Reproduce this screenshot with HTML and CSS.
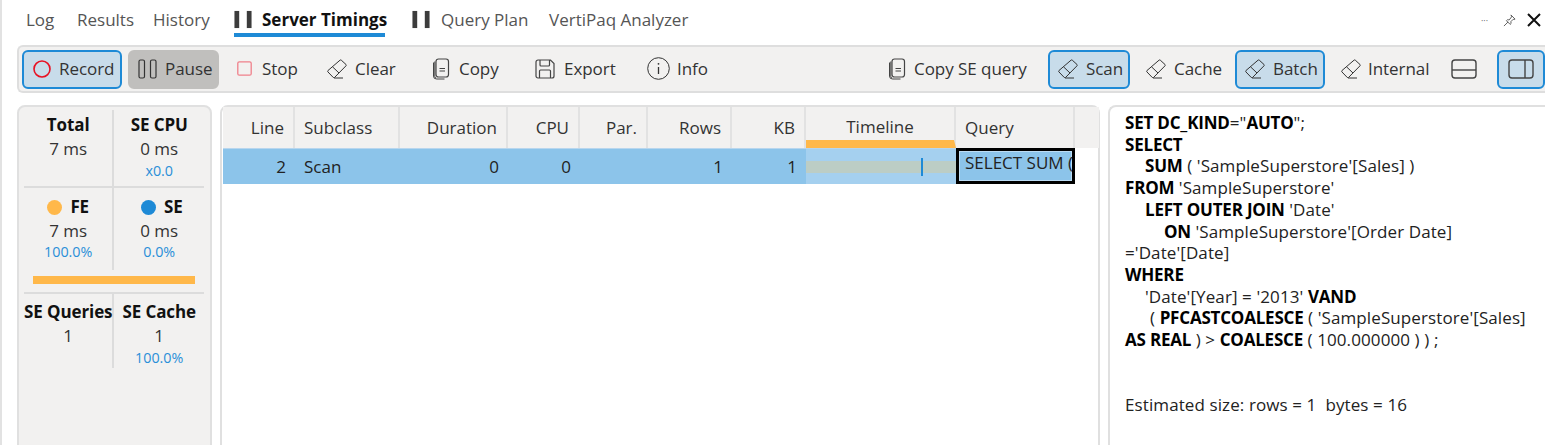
FILE: index.html
```html
<!DOCTYPE html>
<html lang="en">
<head>
<meta charset="utf-8">
<title>Server Timings</title>
<link rel="stylesheet" href="styles.css">
</head>
<body>
<svg class="defs" width="0" height="0" aria-hidden="true">
  <symbol id="eraser" viewBox="0 0 20 20"><path d="M1 11.500 13 1.200a1 1 0 0 1 1.300 0L19 5.500a1 1 0 0 1 0 1.300L7.500 18.500H6.300L1 13a1 1 0 0 1 0-1.500ZM5.500 7.800 12 14M7 19H16" fill="none" stroke="currentColor" stroke-width="1"/></symbol>
  <symbol id="copy" viewBox="0 0 18 22"><rect x="4" y="1" width="12.500" height="18" rx="2.500" fill="none" stroke="currentColor" stroke-width="1.200"/><path d="M1.500 4.500V18a3 3 0 0 0 3 3h8M2.800 3.500V18.500a1.500 1.500 0 0 0 1.500 1.500" fill="none" stroke="currentColor" stroke-width="1"/><path d="M7.500 10.500h5.500M7.500 13h5.500" stroke="currentColor" stroke-width="1"/></symbol>
  <symbol id="pause" viewBox="0 0 18 20"><rect x="0" y="1" width="5" height="18" fill="currentColor"/><rect x="13" y="1" width="5" height="18" fill="currentColor"/></symbol>
</svg>
<div class="page">
  <div class="tabs">
    <nav class="tab-list">
      <span class="tab tab-log">Log</span>
      <span class="tab tab-results">Results</span>
      <span class="tab tab-history">History</span>
      <span class="tab tab-active"><svg class="tab-pause"><use href="#pause"/></svg><b>Server Timings</b></span>
      <span class="tab tab-plan"><svg class="tab-pause"><use href="#pause"/></svg>Query Plan</span>
      <span class="tab tab-verti">VertiPaq Analyzer</span>
    </nav>
    <div class="win-controls">
      <span class="dots">···</span>
      <svg class="pin" viewBox="0 0 14 14"><path d="M8.500 1 13 5.500l-1 .5-1-.3L8.500 8.200l.2 2-1 1-4-4 1-1 2 .2L9.300 3l-.3-1ZM5.500 8.500 1 13" fill="none" stroke="#555" stroke-width="1"/></svg>
      <svg class="close" viewBox="0 0 14 14"><path d="M1 1 13 13M13 1 1 13" stroke="#111" stroke-width="2"/></svg>
    </div>
  </div>

  <div class="toolbar">
    <button class="tool on w-record"><svg class="ic" width="20" height="20" viewBox="0 0 20 20"><circle cx="10" cy="10" r="8" fill="none" stroke="#e81123" stroke-width="1.600"/></svg>Record</button>
    <button class="tool pressed w-pause"><svg class="ic" width="19" height="20" viewBox="0 0 19 20"><rect x="1" y="1" width="5.500" height="18" rx="1.500" fill="none" stroke="#333" stroke-width="1.200"/><rect x="12.500" y="1" width="5.500" height="18" rx="1.500" fill="none" stroke="#333" stroke-width="1.200"/></svg>Pause</button>
    <button class="tool w-stop"><svg class="ic" width="15" height="15" viewBox="0 0 15 15"><rect x=".8" y=".8" width="13.400" height="13.400" rx="1.500" fill="none" stroke="#f0808a" stroke-width="1.300"/></svg>Stop</button>
    <button class="tool w-clear"><svg class="ic era"><use href="#eraser"/></svg>Clear</button>
    <button class="tool w-copy"><svg class="ic cpy"><use href="#copy"/></svg>Copy</button>
    <button class="tool w-export"><svg class="ic" width="20" height="20" viewBox="0 0 20 20"><path d="M1 3a2 2 0 0 1 2-2h12.500L19 4.500V17a2 2 0 0 1-2 2H3a2 2 0 0 1-2-2ZM5 1v5a1 1 0 0 0 1 1h7.500a1 1 0 0 0 1-1V1M4.500 19v-7a1 1 0 0 1 1-1h9a1 1 0 0 1 1 1v7" fill="none" stroke="#444" stroke-width="1.200"/></svg>Export</button>
    <button class="tool w-info"><svg class="ic" width="23" height="23" viewBox="0 0 23 23"><circle cx="11.500" cy="11.500" r="10.800" fill="none" stroke="#333" stroke-width="1"/><path d="M11.500 10v7" stroke="#333" stroke-width="1.300"/><circle cx="11.500" cy="6.800" r=".9" fill="#333"/></svg>Info</button>
    <span class="spacer"></span>
    <button class="tool w-copyse"><svg class="ic cpy"><use href="#copy"/></svg>Copy SE query</button>
    <button class="tool on w-scan"><svg class="ic era"><use href="#eraser"/></svg>Scan</button>
    <button class="tool w-cache"><svg class="ic era"><use href="#eraser"/></svg>Cache</button>
    <button class="tool on w-batch"><svg class="ic era"><use href="#eraser"/></svg>Batch</button>
    <button class="tool w-internal"><svg class="ic era"><use href="#eraser"/></svg>Internal</button>
    <button class="tool w-hlayout"><svg class="ic" width="26" height="20" viewBox="0 0 26 20"><rect x="1" y="1" width="24" height="18" rx="3" fill="none" stroke="#444" stroke-width="1.400"/><path d="M1 11h24" stroke="#444" stroke-width="1.400"/></svg></button>
    <button class="tool on w-vlayout"><svg width="26" height="20" viewBox="0 0 26 20"><rect x="1" y="1" width="24" height="18" rx="3" fill="none" stroke="#444" stroke-width="1.400"/><path d="M17 1v18" stroke="#444" stroke-width="1.400"/></svg></button>
  </div>

  <div class="panels">
    <aside class="summary">
      <div class="metric br"><b>Total</b><span>7 ms</span></div>
      <div class="metric"><b>SE CPU</b><span>0 ms</span><small>x0.0</small></div>
      <div class="rule"></div>
      <div class="metric br m2"><b><i class="dot fe"></i>FE</b><span>7 ms</span><small>100.0%</small></div>
      <div class="metric m2"><b><i class="dot se"></i>SE</b><span>0 ms</span><small>0.0%</small></div>
      <div class="ratio"></div>
      <div class="rule"></div>
      <div class="metric br m3"><b>SE Queries</b><span>1</span></div>
      <div class="metric m3"><b>SE Cache</b><span>1</span><small>100.0%</small></div>
    </aside>

    <section class="grid-panel">
      <div class="table">
        <div class="th r">Line</div>
        <div class="th">Subclass</div>
        <div class="th r">Duration</div>
        <div class="th r">CPU</div>
        <div class="th r">Par.</div>
        <div class="th r">Rows</div>
        <div class="th r">KB</div>
        <div class="th c tl">Timeline</div>
        <div class="th">Query</div>
        <div class="th last"></div>
        <div class="td r">2</div>
        <div class="td">Scan</div>
        <div class="td r">0</div>
        <div class="td r">0</div>
        <div class="td r"></div>
        <div class="td r">1</div>
        <div class="td r">1</div>
        <div class="td tlcell"><span class="tlbar"></span><span class="tick"></span></div>
        <div class="td qcell"><span>SELECT SUM (</span></div>
      </div>
    </section>

    <section class="query">
      <div class="ql"><b>SET DC_KIND</b>="<b>AUTO</b>";</div>
      <div class="ql"><b>SELECT</b></div>
      <div class="ql i1"><b>SUM</b> ( 'SampleSuperstore'[Sales] )</div>
      <div class="ql"><b>FROM</b> 'SampleSuperstore'</div>
      <div class="ql i1"><b>LEFT OUTER JOIN</b> 'Date'</div>
      <div class="ql i2"><b>ON</b> 'SampleSuperstore'[Order Date]</div>
      <div class="ql">='Date'[Date]</div>
      <div class="ql"><b>WHERE</b></div>
      <div class="ql i1">'Date'[Year] = '2013' <b>VAND</b></div>
      <div class="ql i3">( <b>PFCASTCOALESCE</b> ( 'SampleSuperstore'[Sales]</div>
      <div class="ql"><b>AS REAL</b> ) &gt; <b>COALESCE</b> ( 100.000000 ) ) ;</div>
      <div class="ql est">Estimated size: rows = 1&nbsp; bytes = 16</div>
    </section>
  </div>
</div>
</body>
</html>
```
FILE: styles.css
```css
* { box-sizing: border-box; }
html, body { margin: 0; padding: 0; height: 445px; overflow: hidden; background: #fff; }
body { font-family: "Open Sans", "Noto Sans", sans-serif; font-size: 17px; color: #222; }
.defs { position: absolute; }
.page { height: 445px; border-left: 2px solid #e2e2e2; overflow: hidden; }

.tabs { height: 45px; display: flex; justify-content: space-between; }
.tab-list { display: flex; height: 37px; padding-left: 24px; }
.tab { display: flex; align-items: center; height: 37px; padding-top: 1px; color: #555; white-space: nowrap; font-size: 17px; }
.tab-log { width: 51px; }
.tab-results { width: 76px; }
.tab-history { width: 81px; }
.tab-active { width: 178px; color: #111; position: relative; }
.tab-active b { font-weight: 700; font-size: 17px; margin-left: -1px; }
.tab-active::after { content: ""; position: absolute; left: 0; width: 151px; bottom: 0; height: 4px; background: #1e8ad6; }
.tab-plan { width: 137px; }
.tab-verti { width: 140px; }
.tab-pause { width: 18px; height: 19px; margin-right: 11px; color: #3c3c3c; flex: none; }
.win-controls { display: flex; align-items: center; height: 40px; padding-right: 4px; gap: 9px; }
.dots { font-size: 9px; color: #666; width: 8px; margin-right: 5px; line-height: 1; }
.pin { width: 13px; height: 13px; margin-right: 3px; }
.close { width: 14px; height: 14px; margin-left: -1px; }

.toolbar { margin-left: 15px; height: 48px; background: #f2f1f0; border: 1px solid #dedede; border-width: 2px 0 2px 2px; border-radius: 6px 0 0 6px; display: flex; align-items: center; padding-left: 3px; }
.tool { height: 39px; border: 2px solid transparent; border-radius: 6px; background: none; padding: 0 0 1px; display: flex; align-items: center; font: inherit; font-size: 17px; letter-spacing: -.05px; color: #333; white-space: nowrap; flex: none; }
.tool.on { background: #c8dcea; border-color: #1e8ad6; }
.tool.pressed { background: #c0bfbd; border-color: #c0bfbd; }
.ic { flex: none; }
.era { width: 20px; height: 20px; color: #333; }
.cpy { width: 18px; height: 22px; color: #444; }
.spacer { flex: 1; }

.w-record { width: 100px; padding-left: 8px; margin-right: 6px; }
.w-record .ic { margin-right: 7px; }
.w-pause { width: 91px; padding-left: 8px; margin-right: 16px; }
.w-pause .ic { margin-right: 8px; }
.w-stop { width: 75px; margin-right: 16px; }
.w-stop .ic { margin-right: 10px; }
.w-clear { width: 104px; }
.w-clear .ic { margin: 0 8px 0 -1px; }
.w-copy { width: 103px; }
.w-copy .ic { margin-right: 9px; }
.w-export { width: 112px; }
.w-export .ic { margin-right: 9px; }
.w-info { width: 100px; }
.w-info .ic { margin-right: 7px; }
.w-copyse { width: 160px; }
.w-copyse .ic { margin: 0 8px 0 -2px; }
.w-scan { width: 82px; padding-left: 8px; margin-right: 16px; }
.w-scan .ic { margin-right: 8px; }
.w-cache { width: 89px; }
.w-cache .ic { margin: 0 8px 0 -2px; }
.w-batch { width: 90px; padding-left: 8px; margin-right: 16px; }
.w-batch .ic { margin-right: 8px; }
.w-internal { width: 110px; }
.w-internal .ic { margin: 0 7px 0 -2px; }
.w-hlayout { width: 46px; }
.w-hlayout .ic { margin-left: -2px; }
.w-vlayout { width: 48px; padding-left: 9px; }

.panels { display: flex; margin-top: 12px; margin-left: 15px; height: 360px; }
.summary, .grid-panel, .query { border: 2px solid #e0e0e0; border-radius: 8px 8px 0 0; }

.summary { width: 195px; margin-right: 8px; background: #f2f1f0; padding: 3px 6px 0 5px; display: grid; grid-template-columns: 1fr 1fr; grid-auto-rows: min-content; align-content: start; flex: none; }
.metric { display: flex; flex-direction: column; align-items: center; text-align: center; height: 76px; white-space: nowrap; line-height: 24px; padding-top: 3px; font-size: 17px; }
.metric b { font-weight: 700; color: #111; display: flex; align-items: center; font-size: 17px; letter-spacing: -.1px; }
.metric span { color: #333; }
.metric small { color: #2a8fd8; font-size: 14.300px; line-height: 20px; margin-top: 0; }
.br { border-right: 2px solid #dcdcdc; }
.rule { grid-column: 1 / -1; height: 2px; background: #dcdcdc; }
.m2 { height: 82px; padding-top: 7px; }
.m2 small { margin-top: -1px; }
.m3 { height: 74px; padding-top: 6px; }
.m3 small { margin-top: 0; }
.dot { width: 15px; height: 15px; border-radius: 50%; margin-right: 8px; }
.fe { background: #ffb84a; }
.se { background: #1e8ad6; margin-left: 5px; }
.ratio { grid-column: 1 / -1; height: 8px; background: #ffb84a; margin: 6px 9px 8px; }

.grid-panel { width: 880px; margin-right: 8px; padding-left: 1px; background: #fff; flex: none; }
.table { display: grid; grid-template-columns: 72px 105px 108px 72px 68px 84px 74px 150px 119px 24px; grid-template-rows: 41px 36px; }
.th { background: #f2f1f0; border-right: 2px solid #e2e2e2; display: flex; align-items: center; padding: 0 9px; font-size: 17px; color: #333; }
.th.r { justify-content: flex-end; }
.th.c { justify-content: center; }
.th.tl { border-bottom: 8px solid #ffb84a; padding-top: 6px; }
.th.last { border-right: 0; }
.td { background: #8cc4ea; display: flex; align-items: center; padding: 0 9px; font-size: 17px; color: #222; border-top: 1px solid #b8d6ee; }
.td.r { justify-content: flex-end; }
.tlcell { background: #a5d0ef; position: relative; padding: 0; }
.tlbar { position: absolute; left: 0; right: 0; top: 12px; height: 12px; background: #bccdc5; }
.tick { position: absolute; left: 115px; top: 9px; width: 2px; height: 18px; background: #1e8ad6; }
.qcell { border: 3px solid #000; padding: 0 0 0 6px; align-items: flex-start; overflow: hidden; box-shadow: inset 0 0 0 1px #bcdcf4; }
.qcell span { white-space: nowrap; overflow: hidden; width: 107px; line-height: 24px; }

.query { flex: 1; background: #fff; padding: 5px 0 0 15px; border-right: 0; border-radius: 8px 0 0 0; font-size: 17px; line-height: 21.700px; color: #222; letter-spacing: .1px; }
.ql { white-space: nowrap; }
.ql b { color: #000; font-weight: 700; letter-spacing: -.2px; }
.i1 { padding-left: 20px; }
.i2 { padding-left: 39px; }
.i3 { padding-left: 25px; }
.est { margin-top: 43px; }
```
